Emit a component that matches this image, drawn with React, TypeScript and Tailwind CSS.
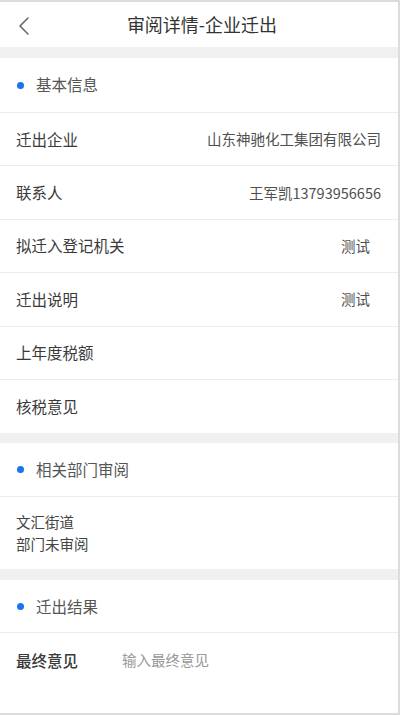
const rows: { label: string; value?: string; pad?: boolean }[] = [
  { label: "迁出企业", value: "山东神驰化工集团有限公司" },
  { label: "联系人", value: "王军凯13793956656" },
  { label: "拟迁入登记机关", value: "测试", pad: true },
  { label: "迁出说明", value: "测试", pad: true },
  { label: "上年度税额" },
  { label: "核税意见" },
];

function SectionTitle({ title, className }: { title: string; className: string }) {
  return (
    <div className={`flex items-center border-b border-[#ececec] pl-[17px] ${className}`}>
      <span className="h-[7px] w-[7px] rounded-full bg-[#1a73f0]" />
      <span className="ml-[12px] text-[15.5px] text-[#555]">{title}</span>
    </div>
  );
}

function Gap({ className }: { className: string }) {
  return <div className={`bg-[#f0f0f0] ${className}`} />;
}

export default function App() {
  return (
    <div
      className="flex h-[715px] w-[400px] flex-col overflow-hidden border-t-2 border-r-2 border-b-2 border-[#dcdcdc] bg-white"
      style={{ fontFamily: '"Noto Sans CJK SC", "Noto Sans", sans-serif' }}
    >
      <header className="relative flex h-[45px] shrink-0 items-center justify-center">
        <svg className="absolute left-[17px] top-[14px]" width="16" height="20" viewBox="0 0 16 20" fill="none">
          <path d="M11 2 L3 10 L11 18" stroke="#666" strokeWidth="1.6" strokeLinecap="round" strokeLinejoin="round" />
        </svg>
        <h1 className="pl-[6px] text-[18px] text-[#333]">审阅详情-企业迁出</h1>
      </header>
      <Gap className="h-[11px] shrink-0" />

      <SectionTitle title="基本信息" className="h-[55px] shrink-0" />
      {rows.map((r, i) => (
        <div
          key={r.label}
          className={`flex h-[53.4px] shrink-0 items-center justify-between pl-[16px] ${r.pad ? "pr-[28px]" : "pr-[17px]"} ${
            i < rows.length - 1 ? "border-b border-[#ececec]" : ""
          }`}
        >
          <span className="text-[15.5px] text-[#3a3a3a]">{r.label}</span>
          {r.value && <span className="text-[14.5px] text-[#505050]">{r.value}</span>}
        </div>
      ))}
      <Gap className="h-[10px] shrink-0" />

      <SectionTitle title="相关部门审阅" className="h-[54px] shrink-0" />
      <div className="flex h-[72px] shrink-0 flex-col justify-center pl-[16px] text-[14.5px] leading-[22px] text-[#444]">
        <span>文汇街道</span>
        <span>部门未审阅</span>
      </div>
      <Gap className="h-[11px] shrink-0" />

      <SectionTitle title="迁出结果" className="h-[53px] shrink-0" />
      <div className="flex h-[54px] shrink-0 items-center pl-[16px]">
        <span className="w-[106px] text-[15.5px] font-medium text-[#3a3a3a]">最终意见</span>
        <span className="text-[14.5px] text-[#999]">输入最终意见</span>
      </div>
    </div>
  );
}
